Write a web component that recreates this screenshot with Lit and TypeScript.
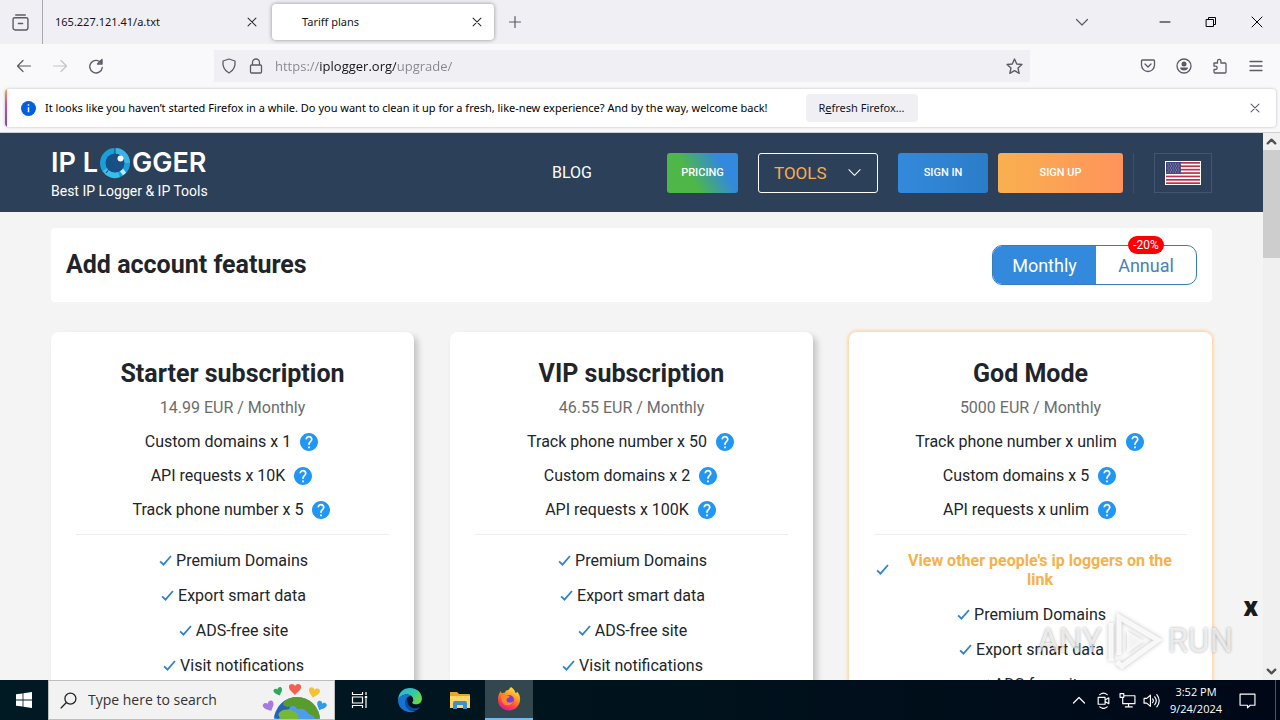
import { LitElement, html, svg, css } from "lit";
import { customElement, state } from "lit/decorators.js";
import { classMap } from "lit/directives/class-map.js";

interface Plan {
  name: string;
  price: string;
  quotas: string[];
  perks: string[];
  highlight?: string;
}

const PLANS: Plan[] = [
  {
    name: "Starter subscription",
    price: "14.99 EUR / Monthly",
    quotas: ["Custom domains x 1", "API requests x 10K", "Track phone number x 5"],
    perks: ["Premium Domains", "Export smart data", "ADS-free site", "Visit notifications"],
  },
  {
    name: "VIP subscription",
    price: "46.55 EUR / Monthly",
    quotas: ["Track phone number x 50", "Custom domains x 2", "API requests x 100K"],
    perks: ["Premium Domains", "Export smart data", "ADS-free site", "Visit notifications"],
  },
  {
    name: "God Mode",
    price: "5000 EUR / Monthly",
    quotas: ["Track phone number x unlim", "Custom domains x 5", "API requests x unlim"],
    perks: ["Premium Domains", "Export smart data", "ADS-free site", "Visit notifications"],
    highlight: "View other people's ip loggers on the link",
  },
];

/* A stroked 16-unit glyph at the size given. */
const line = (d: string, size = 16, width = 1.2) => html`<svg
  width=${size} height=${size} viewBox="0 0 16 16" fill="none" stroke="currentColor"
  stroke-width=${width} stroke-linecap="round" stroke-linejoin="round" aria-hidden="true"
><path d=${d}></path></svg>`;

const CROSS = "M3.5 3.5l9 9M12.5 3.5l-9 9";

@customElement("firefox-chrome")
export class FirefoxChrome extends LitElement {
  static styles = css`
    :host { display: block; font: 12px/16px "Noto Sans", "Open Sans", sans-serif; color: #15141a; background: #f9f9fb; }
    button { border: 0; padding: 0; background: none; font: inherit; color: #5b5b66; display: flex; align-items: center; justify-content: center; }
    svg { display: block; flex: none; }
    .tabs { display: flex; align-items: center; height: 44px; background: #f0f0f4; }
    .view { width: 43px; height: 44px; padding-right: 2px; border-right: 1px solid #aaaab2; flex: none; }
    .tab { display: flex; align-items: center; justify-content: space-between; box-sizing: border-box; width: 226px; height: 36px; padding: 0 8px 0 12px; font-size: 11px; }
    .tab.active { width: 222px; background: #fff; border-radius: 4px; box-shadow: 0 0 4px rgba(0, 0, 0, 0.4); padding: 0 8px 0 30px; margin-left: 3px; }
    .tab button { width: 18px; height: 18px; color: #2b2a33; }
    .new { width: 42px; height: 36px; }
    .window { margin-left: auto; display: flex; align-items: center; }
    .window button { width: 46px; height: 44px; color: #000; }
    .window .all { margin-right: 37px; color: #5b5b66; }
    .bar { display: flex; align-items: center; height: 44px; }
    .nav { display: flex; padding-left: 6px; width: 208px; flex: none; }
    .nav button { width: 36px; height: 32px; }
    .nav .off { color: #c3c3c9; }
    .url { display: flex; align-items: center; flex: 0 1 816px; min-width: 0; height: 32px; box-sizing: border-box; padding: 0 7px; gap: 11px; background: #f0f0f4; color: #5b5b66; }
    .url input { flex: 1; min-width: 0; height: 20px; border: 0; padding: 0; outline: 0; font: 13px/20px "Open Sans", "Noto Sans", sans-serif; color: transparent; background: linear-gradient(90deg, #85858d 0 44px, #15141a 44px 121px, #85858d 121px); -webkit-background-clip: text; background-clip: text; }
    .tools { margin-left: auto; display: flex; padding-right: 6px; }
    .tools button { width: 36px; height: 32px; }
    .notice { display: flex; align-items: center; height: 38px; margin: 1px 4px 5px 5px; border-radius: 4px; background: linear-gradient(#ff9a56, #d74a92 40%, #8341ca) 0 0 / 2px 100% no-repeat #fff; box-shadow: 0 0 3px rgba(0, 0, 0, 0.25); padding: 0 12px 0 16px; gap: 9px; color: #000; font-size: 11px; }
    .notice .refresh { margin-left: 29px; background: #f0f0f4; color: #15141a; border-radius: 4px; width: 112px; height: 28px; flex: none; }
    .notice .close { margin-left: auto; width: 18px; height: 18px; }
  `;

  render() {
    return html`
      <div class="tabs">
        <button class="view" aria-label="View">${line("M3.5 1h9M2.500 3.500h11a1.500 1.500 0 011.500 1.500v8a2 2 0 01-2 2h-10a2 2 0 01-2-2v-8a1.500 1.500 0 011.500-1.500zM6 9h4", 17, 1.3)}</button>
        <div class="tab"><span>165.227.121.41/a.txt</span><button aria-label="Close tab">${line(CROSS, 14)}</button></div>
        <div class="tab active"><span>Tariff plans</span><button aria-label="Close tab">${line(CROSS, 14)}</button></div>
        <button class="new" aria-label="New tab">${line("M8 2.500v11M2.500 8h11")}</button>
        <div class="window">
          <button class="all" aria-label="List tabs">${line("M2.500 5.500L8 11l5.500-5.500")}</button>
          <button aria-label="Minimize">${line("M3 8h10", 16, 1)}</button>
          <button aria-label="Restore">${line("M3.500 5.500h7v7h-7zM5.500 5.500v-2h7v7h-2", 16, 1)}</button>
          <button aria-label="Close">${line("M3 3l10 10M13 3L3 13", 16, 1)}</button>
        </div>
      </div>
      <div class="bar">
        <div class="nav">
          <button aria-label="Back">${line("M1.500 8h13M7 2.500L1.500 8 7 13.500")}</button>
          <button class="off" aria-label="Forward">${line("M1.500 8h13M9 2.500L14.500 8 9 13.500")}</button>
          <button aria-label="Reload">${line("M13.500 5.500a6.300 6.300 0 10.800 4M14 1.500v4.500H9.500zM13 5l.500-2", 16, 1.4)}</button>
        </div>
        <div class="url">
          ${line("M8 1l6 2c.6 5.500-1.800 9.700-6 12-4.200-2.300-6.600-6.500-6-12z", 16, 1.300)}
          ${line("M4.500 7V4.500a3.500 3.500 0 017 0V7M3.500 7h9a1 1 0 011 1v6a1 1 0 01-1 1h-9a1 1 0 01-1-1V8a1 1 0 011-1z", 16, 1.300)}
          <input aria-label="Address" value="https://iplogger.org/upgrade/" />
          ${line("M8 1l2.100 4.600 4.900.5-3.700 3.300 1.100 5L8 11.900l-4.400 2.500 1.100-5L1 6.100l4.900-.5z", 17, 1.300)}
        </div>
        <div class="tools">
          <button aria-label="Save">${line("M2.500 2h11a1 1 0 011 1v4a6.500 6.500 0 01-13 0V3a1 1 0 011-1zM5 6l3 3 3-3", 16, 1.300)}</button>
          <button aria-label="Account"><svg width="16" height="16" viewBox="0 0 16 16" fill="currentColor">
            <circle cx="8" cy="8" r="7" fill="none" stroke="currentColor" stroke-width="1.300"></circle>
            <circle cx="8" cy="6" r="2.500"></circle><path d="M4 9.500h8c0 2-2 3-4 3s-4-1-4-3z"></path></svg></button>
          <button aria-label="Extensions">${line("M2 5h3.500V3a1.700 1.700 0 013.400 0v2H13a1 1 0 011 1v8a1 1 0 01-1 1H3a1 1 0 01-1-1v-2.500h1.500a1.600 1.600 0 000-3.300H2V6a1 1 0 010-1z", 16, 1.300)}</button>
          <button aria-label="Menu">${line("M2 3.500h12M2 8h12M2 12.500h12", 16, 1.300)}</button>
        </div>
      </div>
      <div class="notice">
        <svg width="15" height="15" viewBox="0 0 15 15"><circle cx="7.5" cy="7.5" r="7.500" fill="#0060df"></circle><path d="M7.500 3.200v1.600M7.500 6.300v5" stroke="#fff" stroke-width="1.500"></path></svg>
        <span>It looks like you haven’t started Firefox in a while. Do you want to clean it up for a fresh, like-new experience? And by the way, welcome back!</span>
        <button class="refresh"><span>R<u>e</u>fresh Firefox…</span></button>
        <button class="close" aria-label="Dismiss">${line(CROSS, 14)}</button>
      </div>
    `;
  }
}

@customElement("plan-card")
export class PlanCard extends LitElement {
  static properties = { plan: { attribute: false } };
  declare plan: Plan;

  static styles = css`
    :host { display: block; }
    .card { box-sizing: border-box; height: 100%; padding: 27px 25px; background: #fff; border-radius: 8px; box-shadow: 4px 4px 6px rgba(0, 0, 0, 0.2); color: #212529; text-align: center; }
    .card.top { box-shadow: 0 0 3px 2px #fbd9b0; }
    h2 { margin: 0 0 9px; font-size: 25px; line-height: 30px; font-weight: 700; }
    .price { margin: 0 0 15px; font-size: 16px; line-height: 20px; color: #6c6c6c; }
    ul { list-style: none; margin: 0; padding: 0; display: flex; flex-direction: column; gap: 16px; }
    li { display: flex; align-items: center; justify-content: center; }
    .quota { gap: 9px; padding-right: 2px; line-height: 18px; }
    .perks { border-top: 1px solid #eee; margin-top: 15px; padding-top: 16px; }
    .perk { gap: 4px; padding-left: 2px; line-height: 19px; }
    .gold { color: #f5b14c; font-weight: 700; padding: 0 10px; }
    .help { display: flex; border: 0; padding: 0; background: none; }
    svg { display: block; flex: none; }
  `;

  private perk(text: string, gold = false) {
    return html`<li class="perk">
      <svg width="13" height="12" viewBox="0 0 12 12" fill="none" stroke="#3182ce" stroke-width="1.8"><path d="M.6 6.300L4 9.700 11.500 1"></path></svg>
      <span class=${classMap({ gold })}>${text}</span>
    </li>`;
  }

  render() {
    const p = this.plan;
    return html`<article class=${classMap({ card: true, top: !!p.highlight })}>
      <h2>${p.name}</h2>
      <p class="price">${p.price}</p>
      <ul>
        ${p.quotas.map((q) => html`<li class="quota"><span>${q}</span>
          <button class="help" aria-label="About ${q}"><svg width="18" height="18" viewBox="2 2 20 20" fill="#2196f3"><path d="M12 2C6.480 2 2 6.480 2 12s4.480 10 10 10 10-4.480 10-10S17.520 2 12 2zm1 17h-2v-2h2v2zm2.070-7.750l-.9.920C13.450 12.900 13 13.500 13 15h-2v-.5c0-1.100.45-2.100 1.170-2.830l1.240-1.260c.37-.36.59-.86.59-1.410 0-1.100-.9-2-2-2s-2 .9-2 2H8c0-2.210 1.790-4 4-4s4 1.790 4 4c0 .88-.36 1.680-.93 2.250z"></path></svg></button>
        </li>`)}
      </ul>
      <ul class="perks">
        ${p.highlight ? this.perk(p.highlight, true) : ""}
        ${p.perks.map((t) => this.perk(t))}
      </ul>
    </article>`;
  }
}

@customElement("windows-taskbar")
export class WindowsTaskbar extends LitElement {
  static styles = css`
    :host { display: flex; height: 40px; background: linear-gradient(90deg, #001a24, #00131d 50%, #000818); color: #fff; font: 12px/17px "Open Sans", "Noto Sans", sans-serif; }
    button { border: 0; padding: 0; background: none; color: inherit; display: flex; align-items: center; justify-content: center; width: 50px; }
    svg { display: block; flex: none; }
    .start { width: 48px; }
    .search { display: flex; align-items: center; width: 287px; box-sizing: border-box; border: 1px solid #bdbdbd; background: #f2f2f2; color: #222; padding-left: 11px; gap: 11px; overflow: hidden; }
    .search input { flex: 1; min-width: 0; border: 0; background: none; outline: 0; padding: 0; font: 14px/20px "Open Sans", "Noto Sans", sans-serif; }
    .search input::placeholder { color: #333; opacity: 1; }
    .current { width: 48px; background: #33474f; border-bottom: 2px solid #76b9ed; }
    .tray { margin-left: auto; display: flex; align-items: center; }
    .tray button { width: 24px; height: 40px; }
    .clock { text-align: center; width: 66px; font-size: 11px; }
    .tray .notes { width: 36px; }
    .desk { width: 11px; height: 40px; border-right: 1px solid #4a5560; box-sizing: border-box; margin-right: 4px; }
  `;

  render() {
    return html`
      <button class="start" aria-label="Start"><svg width="16" height="16" viewBox="0 0 16 16" fill="#fff"><path d="M0 2.300l6.600-.9v6.200H0zM7.400 1.300L16 .1v7.500H7.400zM0 8.400h6.600v6.200L0 13.700zM7.400 8.400H16v7.500l-8.600-1.200z"></path></svg></button>
      <label class="search">
        ${line("M9.800 1a5.200 5.200 0 110 10.400A5.200 5.200 0 019.800 1zM6 9.900L1 15", 17, 1.2)}
        <input aria-label="Search" placeholder="Type here to search" />
        <svg width="74" height="38" viewBox="0 0 74 38">
          <defs><clipPath id="globe"><circle cx="37" cy="39" r="23"></circle></clipPath></defs>
          <circle cx="37" cy="39" r="23" fill="#4f9bec"></circle>
          <path d="M19 25a23 23 0 0116-9l-6 12-11 10-5-2z" fill="#2463b5" clip-path="url(#globe)"></path>
          <g clip-path="url(#globe)">
            <path d="M25 20c6-6 16-6 24-3 8 4 12 12 12 20l-6 1c-1-5-5-3-8-7-3-3-4-4-8-3-3 1-2-3-6-3-3 0-5 2-8 0-3-1-2-3 0-5z" fill="#5a9b2e"></path>
            <path d="M20 31c4-3 8-3 13-1 4 1 7 4 5 9H21c0-3-5-4-1-8z" fill="#77b837"></path>
          </g>
          ${[
            [35, 3, 1.1, "#f2604f", 0],
            [17, 7, 0.8, "#2fa75c", -20],
            [55, 7, 1, "#f7c02e", 12],
            [7, 21, 1, "#a57be0", -25],
            [63, 21, 0.9, "#2f9be8", 25],
          ].map(([x, y, s, c, r]) => svg`<path transform="translate(${x} ${y}) rotate(${r}) scale(${s})" fill=${c} d="M0 2c-1-3-6-2.500-5.500 1C-5.200 6-2 7.500 0 10c2-2.500 5.200-4 5.500-7C6-.5 1-1 0 2z"></path>`)}
        </svg>
      </label>
      <button aria-label="Task view"><svg width="18" height="18" viewBox="0 0 18 18" fill="none" stroke="#fff" stroke-width="1.200"><path d="M1.500 1v2.500h10V1M1.500 6h10v6h-10zM1.500 17v-2.500h10V17M15 1v3M15 8v9"></path><path d="M13.800 5h2.400v2.500h-2.400z" fill="#fff" stroke="none"></path></svg></button>
      <button aria-label="Edge"><svg width="26" height="26" viewBox="0 0 24 24">
        <defs><linearGradient id="e1" x1="0" y1="0" x2="1" y2=".6"><stop offset="0" stop-color="#2bb3ea"></stop><stop offset=".6" stop-color="#34c6a9"></stop><stop offset="1" stop-color="#6bd945"></stop></linearGradient></defs>
        <path d="M1 13C1 5 6 1 12 1c7 0 11 5 11 9.500 0 3.500-2.500 5.500-5.500 5.500-2 0-3.500-.8-3.500-1.500s1-1 1-2.800C15 9 12.500 7 9 7c-4 0-7 2-8 6z" fill="url(#e1)"></path>
        <path d="M1 12.500C2 9 5 7 9 7c1.800 0 3.300.5 4.300 1.400C10 8 8 11 8 14c0 5 4 8.500 9 8.500C10 25 1 21 1 12.500z" fill="#1374d6"></path>
        <path d="M9.500 10.500C7 13 7 17 9.500 19.800c3.500 3.700 9 2.700 12-1.300-6 3-12.500 0-12-8z" fill="#0c4a9e"></path></svg></button>
      <button aria-label="File Explorer"><svg width="22" height="20" viewBox="0 0 22 20"><path d="M1 2h7l2 2h10a1 1 0 011 1v13H1z" fill="#e8a722"></path><path d="M1 6h20v12H1z" fill="#ffd566"></path><path d="M4 19v-6a2 2 0 012-2h10a2 2 0 012 2v6h-4v-4H8v4z" fill="#3c8fd0"></path></svg></button>
      <button class="current" aria-label="Firefox"><svg width="24" height="24" viewBox="0 0 24 24">
        <defs><linearGradient id="f1" x1=".8" y1="0" x2=".3" y2="1"><stop offset="0" stop-color="#fff04a"></stop><stop offset=".4" stop-color="#ff9a1f"></stop><stop offset=".75" stop-color="#ff3b4e"></stop><stop offset="1" stop-color="#e3189a"></stop></linearGradient></defs>
        <path d="M14 0c3 2 4 4 4.500 6C20 6 20 5 20 4.500c2.500 3 3.500 5.500 3 9C22.300 19.500 17.500 23.500 12 23.500S1 19.500 1 12.800C1 9 2 6 4 4c0 1 .3 1.700.7 2.200L8 5.500C9 3 11 3 11.500 3 12 2 13 1 14 0z" fill="url(#f1)"></path>
        <circle cx="12" cy="13" r="5" fill="#7a3be0"></circle>
        <path d="M4 9c3-2 5-.5 7-.5 2 .2 2 1.500.5 2.300-1.500.7-2 1-2 2.200 0 3 4.500 3.500 7 1-1 6-12 6-12-2z" fill="#ff8a25"></path></svg></button>
      <div class="tray">
        <button aria-label="Hidden icons">${line("M2.500 11L8 5.500l5.500 5.500")}</button>
        <button aria-label="Meet now">${line("M3 5h6.500v6.500H3zM9.500 7.500l3.500-2v5.500l-3.500-2M4.500 2.500q3.500-3 7 0M4.500 14q3.500 3 7 0", 17, 1.1)}</button>
        <button aria-label="Network">${line("M5 3.500h10v7.500H3.500V6M1 1.500h3.500v3.500H1zM9 11v3M6 14h6.500", 17, 1.1)}</button>
        <button aria-label="Volume">${line("M1 6h2.500L7 3v10.500L3.500 10.500H1zM9 6.500q1.500 1.700 0 3.500M11 4.500q3 3.700 0 7.500M13 2.500q4.500 5.700 0 11.500", 17, 1.1)}</button>
        <div class="clock">3:52 PM<br />9/24/2024</div>
        <button class="notes" aria-label="Notifications">${line("M1 2h14v10.500h-4.500L8 15v-2.500H1z", 17, 1.1)}</button>
        <div class="desk"></div>
      </div>
    `;
  }
}

@customElement("app-root")
export class AppRoot extends LitElement {
  @state() private annual = false;

  static styles = css`
    :host { display: flex; flex-direction: column; height: 100vh; overflow: hidden; font-family: Roboto, "Liberation Sans", sans-serif; font-size: 16px; color: #212529; }
    button { border: 0; padding: 0; background: none; font: inherit; }
    svg { display: block; flex: none; }
    firefox-chrome, windows-taskbar { flex: none; }
    .viewport { flex: 1; min-height: 0; display: flex; position: relative; overflow: hidden; border-top: 1px solid #cfcfd8; }
    .page { flex: 1; min-width: 0; background: #f4f4f4; overflow: hidden; }
    header { background: #2d4059; padding: 0 51px; height: 79px; display: flex; align-items: center; color: #fff; }
    a { color: #fff; text-decoration: none; }
    .brand { margin-right: auto; display: flex; flex-direction: column; gap: 3px; font-size: 14px; line-height: 18px; padding-top: 2px; }
    .logo { display: flex; align-items: center; font: 600 27px/32px Inter, "Open Sans", sans-serif; }
    .logo svg { margin: 0 1px; }
    .btn { display: flex; align-items: center; justify-content: center; box-sizing: border-box; height: 40px; border-radius: 3px; font-size: 11px; font-weight: 500; }
    .pricing { margin-left: 75px; width: 71px; background: linear-gradient(60deg, #4eb748 35%, #3389dc 75%); }
    .menu { margin-left: 20px; width: 120px; border: 1px solid #fff; color: #f9ae4d; font-size: 17px; font-weight: 400; justify-content: space-between; padding: 0 15px; }
    .menu svg { color: #fff; }
    .signin { margin-left: 20px; width: 90px; background: linear-gradient(90deg, #3389dc, #2c7dc8); }
    .signup { margin-left: 10px; width: 125px; background: linear-gradient(90deg, #f9b04f, #ff935c); }
    .lang { margin-left: 10px; padding-left: 20px; border-left: 1px solid #3d5069; }
    .flag { width: 58px; border: 1px solid #42566f; border-radius: 0; }
    main { padding: 16px 51px 0; display: flex; flex-direction: column; gap: 30px; }
    .intro { display: flex; align-items: center; justify-content: space-between; height: 74px; padding: 0 15px; background: #fff; border-radius: 4px; }
    h1 { margin: 0; font-size: 25px; line-height: 32px; font-weight: 700; }
    .period { display: flex; height: 40px; box-sizing: border-box; border: 1px solid #3a7cb8; border-radius: 10px; font-size: 18px; }
    .period button { position: relative; width: 100px; color: #4682b4; border-radius: 0 9px 9px 0; }
    .period button:first-child { width: 103px; border-radius: 9px 0 0 9px; }
    .period .on { background: #3389dc; color: #fff; }
    .off { position: absolute; top: -10px; left: 32px; width: 36px; height: 18px; border-radius: 9px; background: #f00; color: #fff; font-size: 12px; line-height: 18px; text-align: center; }
    .plans { display: grid; grid-template-columns: repeat(3, 1fr); gap: 36px; }
    .scroll { width: 17px; flex: none; background: #f0f0f0; color: #505050; display: flex; flex-direction: column; align-items: center; }
    .scroll button { height: 17px; color: inherit; }
    .thumb { width: 100%; height: 108px; background: #cdcdcd; margin-bottom: auto; }
    .dismiss { position: absolute; right: 22px; bottom: 59px; font-size: 28px; line-height: 28px; font-weight: 900; color: #1b1b1b; }
    .mark { position: absolute; right: 47px; bottom: 9px; display: flex; align-items: center; gap: 4px; font-size: 33px; line-height: 60px; color: rgba(255, 255, 255, 0.7); text-shadow: 0 0 3px rgba(0, 0, 0, 0.35); pointer-events: none; }
    .mark svg { filter: drop-shadow(0 0 2px rgba(0, 0, 0, 0.3)); }
  `;

  render() {
    return html`
      <firefox-chrome></firefox-chrome>
      <div class="viewport">
        <div class="page">
          <header>
            <a class="brand" href="#">
              <span class="logo">IP L<svg width="32" height="32" viewBox="0 0 32 32">
                <circle cx="16" cy="16" r="12" fill="none" stroke="#1b9fd8" stroke-width="6"></circle>
                <path d="M6 22.500A12 12 0 0020 27.500" fill="none" stroke="#35c0ea" stroke-width="6"></path>
                <path d="M16 4a12 12 0 0112 12" fill="none" stroke="#38b5e6" stroke-width="6"></path>
                <path d="M22.500 23l3 4" stroke="#bdeafa" stroke-width="4"></path>
                <circle cx="16" cy="16" r="9.500" fill="#174f86"></circle>
                <circle cx="21.500" cy="11.500" r="3" fill="#fff"></circle>
                <path d="M16 0v7M7 26l3-4" stroke="#2d4059"></path>
              </svg>GGER</span>
              <span>Best IP Logger &amp; IP Tools</span>
            </a>
            <a href="#">BLOG</a>
            <a class="btn pricing" href="#">PRICING</a>
            <button class="btn menu">TOOLS ${line("M2 5l6 6 6-6", 15, 1.1)}</button>
            <a class="btn signin" href="#">SIGN IN</a>
            <a class="btn signup" href="#">SIGN UP</a>
            <div class="lang">
              <button class="btn flag" aria-label="Language: English"><svg width="36" height="24" viewBox="0 0 36 24">
                <rect width="36" height="24" fill="#fff"></rect>
                ${[1, 4.4, 7.8, 11.2, 14.6, 18, 21.3].map((y) => svg`<rect x="1" y=${y} width="34" height="1.700" fill="#b8324a"></rect>`)}
                <rect x="1" y="1" width="15" height="11.900" fill="#46467f"></rect>
                <path d="M2.500 3h13M3.500 5h12M2.500 7h13M3.500 9h12M2.500 11h13" stroke="#b9b9d4" stroke-width=".8" stroke-dasharray="1 1.500"></path>
              </svg></button>
            </div>
          </header>
          <main>
            <section class="intro">
              <h1>Add account features</h1>
              <div class="period">
                <button class=${classMap({ on: !this.annual })} aria-pressed=${!this.annual} @click=${() => (this.annual = false)}>Monthly</button>
                <button class=${classMap({ on: this.annual })} aria-pressed=${this.annual} @click=${() => (this.annual = true)}>Annual<span class="off">-20%</span></button>
              </div>
            </section>
            <section class="plans">${PLANS.map((p) => html`<plan-card .plan=${p}></plan-card>`)}</section>
          </main>
        </div>
        <div class="scroll">
          <button aria-label="Scroll up">${line("M4 10l4-4 4 4", 15, 2.4)}</button>
          <div class="thumb"></div>
          <button aria-label="Scroll down">${line("M4 6l4 4 4-4", 15, 2.4)}</button>
        </div>
        <button class="dismiss" aria-label="Close">x</button>
        <div class="mark"><span>ANY</span><svg width="58" height="60" viewBox="0 0 58 60" fill="none" stroke="#fff" stroke-opacity=".85" stroke-width="5"><path d="M5 12v38M13 44V6l39 23-36 26-5-4"></path><path d="M21 20v22l17-12z" fill="#fff" stroke="none" opacity=".8"></path></svg><span>RUN</span></div>
      </div>
      <windows-taskbar></windows-taskbar>
    `;
  }
}
